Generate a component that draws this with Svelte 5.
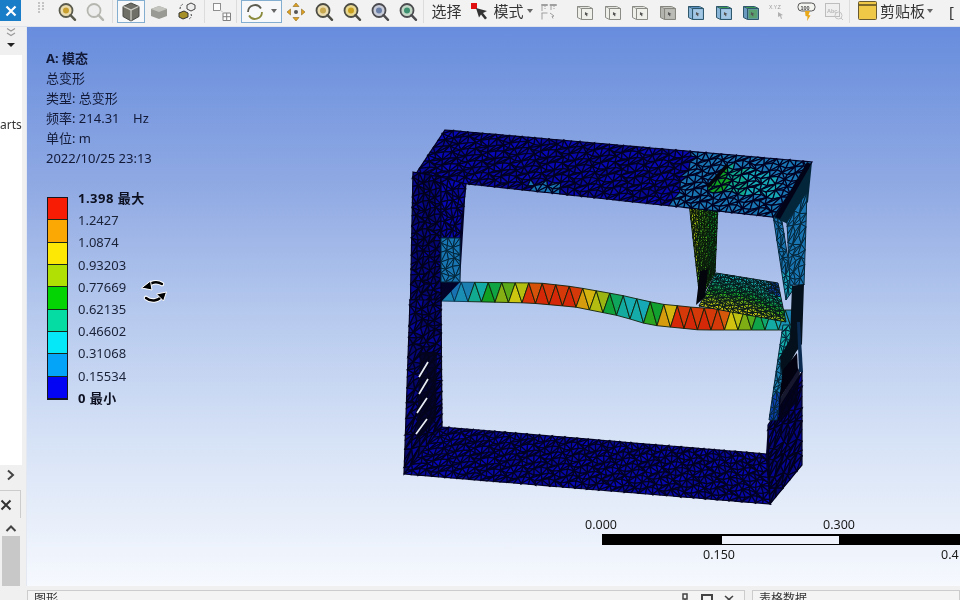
<script>
  const infoLines = ['总变形', '类型: 总变形', '频率: 214.31    Hz', '单位: m', '2022/10/25 23:13'];
  const legend = [
    { label: '1.398 最大', color: '#f81c04', strong: true },
    { label: '1.2427', color: '#fca804' },
    { label: '1.0874', color: '#fce804' },
    { label: '0.93203', color: '#b0e004' },
    { label: '0.77669', color: '#04d404' },
    { label: '0.62135', color: '#04dca4' },
    { label: '0.46602', color: '#04e8f8' },
    { label: '0.31068', color: '#04a4f8' },
    { label: '0.15534', color: '#0404f4' },
    { label: '0 最小', strong: true }
  ];

  // muted contour ramp, value 0..1
  const ramp = [
    [0, [8, 8, 172]], [0.11, [12, 70, 176]], [0.22, [28, 128, 178]], [0.33, [22, 172, 182]],
    [0.44, [16, 168, 130]], [0.55, [16, 160, 34]], [0.66, [140, 176, 18]], [0.77, [210, 200, 16]],
    [0.88, [216, 136, 12]], [1, [212, 40, 8]]
  ];
  function heat(v) {
    v = Math.max(0, Math.min(1, v));
    for (let i = 1; i < ramp.length; i++) {
      if (v <= ramp[i][0]) {
        const [a, ca] = ramp[i - 1];
        const [b, cb] = ramp[i];
        const t = (v - a) / (b - a);
        return `rgb(${ca.map((c, k) => Math.round(c + (cb[k] - c) * t)).join(',')})`;
      }
    }
    return 'rgb(212,40,8)';
  }
  function lerp(points, x) {
    if (x <= points[0][0]) return points[0][1];
    for (let i = 1; i < points.length; i++) {
      if (x <= points[i][0]) {
        const t = (x - points[i - 1][0]) / (points[i][0] - points[i - 1][0]);
        return points[i - 1][1] + (points[i][1] - points[i - 1][1]) * t;
      }
    }
    return points[points.length - 1][1];
  }

  // triangulated quad: corners go a-b along u, d-c along u; inner vertices wobble a bit
  function quad([a, b, c, d], nu, nv, colorAt, line = '#020222', w = 1.2) {
    const out = [];
    const at = (i, j) => {
      let u = i / nu;
      let v = j / nv;
      if (i > 0 && i < nu) u += (Math.sin(i * 12.9 + j * 78.2) * 0.3) / nu;
      if (j > 0 && j < nv) v += (Math.sin(i * 39.3 + j * 11.1) * 0.3) / nv;
      return [
        (a[0] * (1 - u) + b[0] * u) * (1 - v) + (d[0] * (1 - u) + c[0] * u) * v,
        (a[1] * (1 - u) + b[1] * u) * (1 - v) + (d[1] * (1 - u) + c[1] * u) * v
      ];
    };
    for (let i = 0; i < nu; i++) {
      for (let j = 0; j < nv; j++) {
        const p1 = at(i, j);
        const p2 = at(i + 1, j);
        const p3 = at(i + 1, j + 1);
        const p4 = at(i, j + 1);
        const tris = (i + j) % 2 ? [[p1, p2, p3], [p1, p3, p4]] : [[p1, p2, p4], [p2, p3, p4]];
        for (const t of tris) {
          const cx = (t[0][0] + t[1][0] + t[2][0]) / 3;
          const cy = (t[0][1] + t[1][1] + t[2][1]) / 3;
          out.push({ d: t.map((p) => p.map((n) => n.toFixed(1)).join(',')).join(' '), fill: colorAt(cx, cy), line, w });
        }
      }
    }
    return out;
  }

  const blue = (x, y) => `rgb(8,8,${150 + Math.round((Math.sin(x * 0.13 + y * 0.37) + 1) * 16)})`;
  const darkBlue = (x, y) => `rgb(6,6,${104 + Math.round((Math.sin(x * 0.5 + y * 0.7) + 1) * 24)})`;

  function topColor(x, y) {
    const edge = 672 + (205 - y) * 0.4;
    if (x < edge) {
      if (y > 183 && y < 192 && x > 530 && x < 562) return heat(0.2);
      return blue(x, y);
    }
    const inPatch = y > 165 + (x - 730) * 0.28 && y < 190 + (x - 710) * 0.1 && x > 708 + (188 - y) * 0.9 && x < 778;
    if (inPatch) return heat(x < 728 ? 0.55 : x < 745 ? 0.42 : 0.32);
    return heat(0.2);
  }
  const beamHeat = [
    [441, 0.2], [462, 0.24], [472, 0.36], [490, 0.55], [508, 0.68], [522, 0.8], [530, 1], [572, 1], [580, 0.85],
    [595, 0.72], [610, 0.5], [625, 0.34], [640, 0.34], [650, 0.55], [660, 0.72], [670, 1], [716, 1], [724, 0.82],
    [738, 0.7], [752, 0.55], [770, 0.36], [786, 0.24]
  ];
  const beamTop = [[440, 282], [540, 283], [575, 287], [620, 295], [660, 304], [700, 308], [786, 310]];
  const beamBot = [[440, 301], [530, 303], [575, 307], [620, 316], [650, 325], [700, 330], [786, 330]];
  function beam() {
    const out = [];
    for (let x = 441; x < 786; x += 13.5) {
      const x2 = x + 13.5;
      const mid = x + 6.75;
      const v = lerp(beamHeat, mid);
      const line = x < 466 ? '#06304a' : '#102008';
      const tris = [
        [[x, lerp(beamBot, x)], [mid, lerp(beamTop, mid)], [x2, lerp(beamBot, x2)]],
        [[mid, lerp(beamTop, mid)], [x2, lerp(beamBot, x2)], [x2 + 6.75, lerp(beamTop, x2 + 6.75)]]
      ];
      tris.forEach((t, i) => {
        out.push({
          d: t.map((p) => p.map((n) => n.toFixed(1)).join(',')).join(' '),
          fill: heat(v + (i ? -0.02 : 0.02)),
          line,
          w: 0.9
        });
      });
    }
    return out;
  }

  function shelfColor(x, y) {
    const t = (y - (273 + (x - 716) * 0.16)) / 36;
    if (x > 770 && t < 0.35) return heat(0.1);
    return heat(0.3 + 0.48 * t - Math.max(0, x - 750) * 0.004);
  }

  const backMesh = [
    ...quad([[689, 203], [718, 205], [715, 273], [700, 300]], 10, 20, (x) => heat(x < 698 ? 0.68 : x < 708 ? 0.6 : 0.54), '#08160a', 1),
    ...beam(),
    ...quad([[716, 273], [778, 283], [786, 322], [699, 306]], 18, 11, shelfColor, '#06181a', 1),
    ...quad([[773, 215], [781, 215], [793, 290], [786, 300]], 2, 11, (x, y) => heat(y < 270 ? 0.2 : 0.3), '#04263a', 1)
  ];
  const frontMesh = [
    ...quad([[787, 222], [807, 192], [804, 285], [790, 285]], 3, 10, () => heat(0.2), '#04263a', 1),
    ...quad([[445, 130], [812, 162], [773, 217], [413, 178]], 52, 9, topColor),
    ...quad([[413, 172], [441, 177], [441, 305], [410, 322]], 5, 20, darkBlue, '#02021c', 1.2),
    ...quad([[441, 177], [466, 184], [460, 238], [441, 238]], 4, 8, blue),
    ...quad([[441, 238], [460, 238], [460, 282], [441, 282]], 3, 6, () => heat(0.2), '#04263a', 1),
    ...quad([[410, 300], [441, 300], [442, 427], [404, 474]], 5, 22, darkBlue, '#02021c', 1.2),
    ...quad([[442, 427], [766, 454], [770, 504], [404, 474]], 56, 9, blue),
    ...quad([[768, 425], [802, 372], [802, 465], [770, 504]], 5, 11, darkBlue, '#02021c', 1.2),
    ...quad([[769, 420], [777, 420], [792, 325], [783, 325]], 2, 14, (x, y) => heat(y > 395 ? 0.1 : y > 360 ? 0.22 : 0.36), '#04263a', 1)
  ];

  const grips = [0, 1, 2, 3, 4, 5, 6];
</script>

{#snippet lens(fill, ring, inner)}
  <svg class="icon" width="20" height="20" viewBox="0 0 20 20">
    <circle cx="9" cy="8.5" r="6.5" fill={fill} stroke={ring} stroke-width="1.8" />
    {#if inner}<circle cx="9" cy="8.5" r="3" fill={inner} />{/if}
    <path d="M13.5 13.2l4.5 4.6" stroke={ring} stroke-width="2.4" stroke-linecap="round" />
  </svg>
{/snippet}

{#snippet cube(edge, side, top, front)}
  <svg class="icon" width="18" height="18" viewBox="0 0 18 18">
    <path d="M1.5 3.500h11l4 2v11h-11l-4-2z" fill={side} stroke={edge} stroke-width="1" />
    <path d="M1.500 3.500l4 2h11M5.500 5.500v11" fill="none" stroke={edge} stroke-width="1" />
    <path d="M6.500 6.500h9v9h-9z" fill={front} />
    <path d="M2.500 4h9.500l3 1h-9.500z" fill={top} />
    <path d="M9 9l3.500 2-1.500.5.500 1.500-1 .3-.600-1.500-1 .5z" fill="#555" />
  </svg>
{/snippet}

<div class="page">
  <header class="toolbar">
    <div class="close-btn">
      <svg width="12" height="12" viewBox="0 0 12 12"><path d="M1.500 1.500l9 9M10.500 1.500l-9 9" stroke="#fff" stroke-width="2.200" /></svg>
    </div>
    <div class="gripper">
      {#each grips as g}<i></i>{/each}
    </div>
    <div class="tool">{@render lens('#eadcae', '#5a5a4c', '#c9a030')}</div>
    <div class="tool faded">{@render lens('#ececec', '#a8a8a0', null)}</div>
    <span class="sep first"></span>
    <div class="tool selected">
      <svg class="icon" width="20" height="20" viewBox="0 0 20 20">
        <path d="M10 1l8 3.500v10l-8 4.500-8-4.500v-10z" fill="#6f6f68" stroke="#4a4a44" />
        <path d="M2.500 4.500l7.500 3.500 7.500-3.500M10 8v10.500" fill="none" stroke="#d0d0c8" stroke-width="1.200" />
      </svg>
    </div>
    <div class="tool">
      <svg class="icon" width="18" height="16" viewBox="0 0 18 16">
        <path d="M9 2l8 3v7l-8 3-8-3v-7z" fill="#9a9a94" />
        <path d="M1 5l8 3 8-3-8-3z" fill="#c4c4be" />
      </svg>
    </div>
    <div class="tool">
      <svg class="icon" width="20" height="20" viewBox="0 0 20 20">
        <path d="M2 11l5-2 4 2v4l-5 2-4-2z" fill="#a58f28" stroke="#333" />
        <path d="M10 3l4-2 4 2v4l-4 2-4-2z" fill="#eee" stroke="#444" />
        <path d="M3 7c0-3 2-5 4-5M14 12c1 2 0 4-2 5" fill="none" stroke="#444" stroke-dasharray="2 1.500" />
      </svg>
    </div>
    <span class="sep"></span>
    <div class="tool faded">
      <svg class="icon" width="20" height="20" viewBox="0 0 20 20">
        <rect x="1.500" y="1.500" width="7" height="7" fill="#fff" stroke="#777" />
        <path d="M11 11h7.500v7.500h-7.500zM14.700 11v7.500M11 14.700h7.500" fill="#fff" stroke="#666" />
        <path d="M8 8l4 3" stroke="#bbb" />
      </svg>
    </div>
    <span class="sep tight"></span>
    <div class="rotate-tool selected">
      <svg width="20" height="20" viewBox="0 0 20 20" fill="none" stroke-width="1.800">
        <path d="M3 10a7 7 0 0 1 13-3.500" stroke="#5c5c50" />
        <path d="M17 10a7 7 0 0 1-13 3.500" stroke="#8a8a3c" />
      </svg>
      <span class="caret"></span>
    </div>
    <div class="tool">
      <svg class="icon" width="20" height="20" viewBox="0 0 20 20">
        <path d="M10 1l3 3.500h-6zM10 19l3-3.500h-6zM1 10l3.500-3v6zM19 10l-3.500-3v6z" fill="#e0a020" stroke="#8a6a20" stroke-width=".6" />
        <circle cx="10" cy="10" r="2" fill="#555" />
      </svg>
    </div>
    <div class="tool">{@render lens('#eadcae', '#4c4c44', '#c8a850')}</div>
    <div class="tool">{@render lens('#e8d890', '#4c4c44', '#c9a020')}</div>
    <div class="tool">{@render lens('#c8ccd8', '#4c4c50', '#6a80a8')}</div>
    <div class="tool">{@render lens('#c4d8c8', '#4c4c50', '#3c9070')}</div>
    <span class="sep wide"></span>
    <span class="tool-text">选择</span>
    <svg class="pointer" width="20" height="20" viewBox="0 0 20 20">
      <rect x="1" y="2" width="6" height="6" fill="#e01010" />
      <path d="M6 7l11 3-4 2 4 5-2 1.500-4-5-2 3z" fill="#333" />
    </svg>
    <span class="tool-text mode">模式</span>
    <span class="caret"></span>
    <div class="tool small first-cube">
      <svg class="icon" width="18" height="18" viewBox="0 0 18 18" fill="none" stroke="#a0a0a0">
        <path d="M1.500 1.500h6v1h-6zM10 1.500h6.500v1h-6.500zM2 3v5M11 3v4M1.500 10h6M2 10v6.500M10 10l4 3-2 .5 1 2" />
        <path d="M5 3v3M14 3v3" stroke-dasharray="1 1" />
      </svg>
    </div>
    <div class="tool small cube-gap">{@render cube('#8c8c86', '#efefea', '#e4e4de', '#f0f0ea')}</div>
    <div class="tool small">{@render cube('#8c8c86', '#efefea', '#e4e4de', '#f0f0ea')}</div>
    <div class="tool small">{@render cube('#8c8c86', '#efefea', '#e4e4de', '#f0f0ea')}</div>
    <div class="tool small">{@render cube('#86867e', '#b4b4ae', '#c8c8c2', '#bcbcb6')}</div>
    <div class="tool small">{@render cube('#30586c', '#88b4d8', '#5a90c0', '#a4c8e4')}</div>
    <div class="tool small">{@render cube('#30586c', '#88b4d8', '#3a9a50', '#a4c8e4')}</div>
    <div class="tool small">{@render cube('#30586c', '#6a9ac0', '#3a9a50', '#58a070')}</div>
    <div class="tool small">
      <svg class="icon" width="20" height="18" viewBox="0 0 20 18">
        <text x="0" y="6" class="xyz">X.Y.Z</text>
        <path d="M9 9l5 3-2 .5 1 3-1 .4-1-3-2 1z" fill="#b0b0b0" />
      </svg>
    </div>
    <div class="tool small">
      <svg class="icon" width="20" height="20" viewBox="0 0 20 20">
        <rect x="1" y="1" width="17" height="8" rx="3.500" fill="#f4f4f0" stroke="#555" />
        <text x="3.500" y="7.500" class="tag">100</text>
        <path d="M8 9h5l-1.500 4 2 .5-3.500 5.500 .5-4.500-2-.5z" fill="#e8a818" />
      </svg>
    </div>
    <div class="tool small faded">
      <svg class="icon" width="20" height="20" viewBox="0 0 20 20">
        <rect x="1.500" y="1.500" width="14" height="13" fill="#efefef" stroke="#b0b0b0" />
        <text x="3" y="11" class="tag grey">Abc</text>
        <circle cx="14.500" cy="13.500" r="3.500" fill="none" stroke="#b8b8b8" />
        <path d="M17 16l2 2" stroke="#b8b8b8" />
      </svg>
    </div>
    <span class="sep last"></span>
    <svg class="clipboard" width="19" height="19" viewBox="0 0 19 19">
      <rect x=".5" y=".5" width="18" height="18" rx="1" fill="#f0c848" stroke="#6a5a30" />
      <path d="M1 4h17" stroke="#5a4a20" stroke-width="1.500" />
    </svg>
    <span class="tool-text clip">剪贴板</span>
    <span class="caret"></span>
    <span class="tool-text bracket">[</span>
  </header>

  <div class="workspace">
    <aside class="sidebar">
      <div class="side-top">
        <svg width="12" height="11" viewBox="0 0 12 11" fill="none" stroke="#9a9a9a" stroke-width="1.200">
          <path d="M2 1.500l4 2.500 4-2.500M2 6l4 2.500 4-2.500" />
        </svg>
        <span class="down-tri"></span>
      </div>
      <div class="tree"><span class="parts">arts</span></div>
      <div class="side-arrow">
        <svg width="10" height="12" viewBox="0 0 10 12" fill="none" stroke="#444" stroke-width="2"><path d="M2 1.500l5 4.500-5 4.500" /></svg>
      </div>
      <div class="side-tab">
        <svg width="12" height="12" viewBox="0 0 12 12"><path d="M1.500 1.500l9 9M10.500 1.500l-9 9" stroke="#333" stroke-width="2" /></svg>
      </div>
      <div class="side-up">
        <svg width="12" height="9" viewBox="0 0 12 9" fill="none" stroke="#444" stroke-width="2"><path d="M1.500 7l4.500-4.500 4.500 4.500" /></svg>
      </div>
      <div class="thumb"></div>
    </aside>

    <main class="viewport">
      <svg class="model" viewBox="26 27 934 559" width="934" height="559">
        {#each backMesh as t}
          <polygon points={t.d} fill={t.fill} stroke={t.line} stroke-width={t.w} />
        {/each}
        <!-- backing so no sliver of sky shows between the faces -->
        <path d="M812 162l-4 40-20 22-15-7z" fill="#04263a" />
        <path d="M413 172l53 12-6 98-19 20 1 125-37 47 6-154z" fill="#03032a" />
        <path d="M766 454l2-29 34-53v93l-32 39z" fill="#03032a" />
        {#each frontMesh as t}
          <polygon points={t.d} fill={t.fill} stroke={t.line} stroke-width={t.w} />
        {/each}
        <!-- slots and dark slats on the two end columns -->
        <path d="M420 352l17 0-1 68-20 22z" fill="#03031c" opacity=".85" />
        <path d="M419 377l9-15M419 394l9-15M417 413l10-15M416 434l11-15" stroke="#e8edf4" stroke-width="1.700" />
        <path d="M792 286l12-2-2 60-6 8-14 25-2-20 10-18z" fill="#04101c" />
        <path d="M783 370l14-17 1 17-19 30z" fill="#020210" />
        <path d="M779 422l18-20 3-30-2-4-19 32z" fill="#020218" opacity=".9" />
        <path d="M780 219l28-49 3-6-4-2-32 55z" fill="#030318" />
        <path d="M709 188l20-22-3-2-20 22zM696 305l4-34 8-2-3 28z" fill="#04040c" />
        <path d="M800 322l3 50h-4l-2-50z" fill="#0a2a50" />
      </svg>

      <section class="info">
        <strong>A: 模态</strong>
        {#each infoLines as line}
          <span>{line}</span>
        {/each}
      </section>

      <section class="legend">
        <div class="swatches">
          {#each legend as item}
            {#if item.color}<i style="background:{item.color}"></i>{/if}
          {/each}
        </div>
        <div class="labels">
          {#each legend as item}
            <span class:strong={item.strong}>{item.label}</span>
          {/each}
        </div>
      </section>

      <svg class="cursor" width="28" height="28" viewBox="0 0 28 28">
        <g fill="none" stroke-linecap="round">
          <path d="M7 10c3-5 10-6 15-3M21 20c-3 4-10 5-15 1" stroke="#fff" stroke-width="4.500" />
          <path d="M7 10c3-5 10-6 15-3M21 20c-3 4-10 5-15 1" stroke="#000" stroke-width="2.400" />
        </g>
        <path d="M1.500 11l9-7 1.500 9z" fill="#000" stroke="#fff" />
        <path d="M26.500 15l-10 2 7 7z" fill="#000" stroke="#fff" />
      </svg>

      <section class="scale">
        <div class="ticks upper"><span>0.000</span><span>0.300</span></div>
        <div class="bar"><i></i></div>
        <div class="ticks lower"><span>0.150</span><span>0.4</span></div>
      </section>
    </main>
  </div>

  <footer class="bottom">
    <div class="panel graph">
      <span>图形</span>
      <div class="panel-icons">
        <svg width="10" height="10" viewBox="0 0 10 10"><path d="M3 1h4v5h-4zM5 6v4" fill="none" stroke="#444" stroke-width="1.500" /></svg>
        <svg width="12" height="10" viewBox="0 0 12 10"><path d="M1 2h10v8h-10z" fill="none" stroke="#444" stroke-width="2" /></svg>
        <svg width="10" height="10" viewBox="0 0 10 10"><path d="M1 3l8 7M9 3l-8 7" stroke="#444" stroke-width="1.600" /></svg>
      </div>
    </div>
    <div class="panel table"><span>表格数据</span></div>
  </footer>
</div>

<style>
  :global(body) {
    margin: 0;
    background: #f0f0f0;
  }

  .page {
    width: 960px;
    height: 600px;
    display: flex;
    flex-direction: column;
    overflow: hidden;
    font-family: 'Noto Sans', 'Noto Sans CJK SC', sans-serif;
    color: #222;
  }

  .toolbar {
    height: 27px;
    flex: none;
    display: flex;
    align-items: flex-start;
    background: #f2f2f2;
    box-sizing: border-box;
    border-bottom: 1px solid #dfe4ec;
    filter: blur(0.4px);
    overflow: hidden;
  }

  .close-btn {
    width: 21px;
    height: 21px;
    flex: none;
    display: flex;
    align-items: center;
    justify-content: center;
    background: #1a7dc8;
  }

  .gripper {
    width: 8px;
    margin: 2px 7px 0 17px;
    display: grid;
    grid-template-columns: 2px 2px;
    gap: 1px 2px;
    flex: none;
  }
  .gripper i {
    height: 2px;
    background: #c4c4c4;
  }

  .tool {
    width: 28px;
    height: 23px;
    flex: none;
    display: flex;
    align-items: center;
    justify-content: center;
    box-sizing: border-box;
  }
  .tool.small {
    width: 27.7px;
  }
  .icon {
    display: block;
  }
  .faded {
    opacity: 0.8;
  }
  .selected {
    border: 1px solid #84aed0;
    background: #f6f8fa;
  }

  .sep {
    width: 1px;
    height: 23px;
    flex: none;
    margin: 0 3px;
    background: #dcdcdc;
  }
  .sep.first {
    margin: 0 3.500px 0 3px;
  }
  .sep.tight {
    margin: 0 4px 0 0;
  }
  .sep.wide {
    margin: 0 8px 0 1px;
  }
  .sep.last {
    margin: 0 8px 0 1px;
  }

  .rotate-tool {
    width: 41px;
    height: 23px;
    flex: none;
    display: flex;
    align-items: center;
    gap: 6px;
    padding-left: 3px;
    box-sizing: border-box;
  }

  .caret {
    width: 0;
    height: 0;
    flex: none;
    margin-top: 9px;
    border: 3.500px solid transparent;
    border-top: 4px solid #666;
    border-bottom: 0;
    align-self: flex-start;
  }
  .rotate-tool .caret {
    margin-top: 8px;
  }

  .tool-text {
    flex: none;
    font-size: 15px;
    line-height: 22px;
    color: #333;
  }
  .pointer {
    flex: none;
    margin: 1px 4px 0 8px;
  }
  .mode {
    margin-right: 3px;
  }
  .first-cube {
    margin-left: 3px;
  }
  .cube-gap {
    margin-left: 8px;
  }
  .clipboard {
    flex: none;
    margin-top: 1px;
  }
  .clip {
    margin: 0 2px 0 3px;
  }
  .bracket {
    margin-left: 16px;
  }
  .xyz {
    font-size: 5px;
    fill: #999;
    font-family: 'Liberation Sans', sans-serif;
  }
  .tag {
    font-size: 5.500px;
    font-weight: 700;
    fill: #444;
    font-family: 'Liberation Sans', sans-serif;
  }
  .tag.grey {
    fill: #aaa;
  }

  .workspace {
    flex: 1;
    min-height: 0;
    display: flex;
  }

  .sidebar {
    width: 26px;
    flex: none;
    display: flex;
    flex-direction: column;
    align-items: flex-start;
    background: #f0f0f0;
    filter: blur(0.4px);
  }
  .side-top {
    width: 22px;
    height: 28px;
    display: flex;
    flex-direction: column;
    align-items: center;
    gap: 5px;
    flex: none;
  }
  .down-tri {
    width: 0;
    height: 0;
    border: 4px solid transparent;
    border-top: 4px solid #222;
    border-bottom: 0;
  }
  .tree {
    width: 22px;
    height: 410px;
    flex: none;
    background: #fff;
    overflow: hidden;
  }
  .parts {
    display: block;
    margin-top: 60px;
    font-size: 12px;
    line-height: 20px;
    white-space: nowrap;
    color: #333;
  }
  .side-arrow {
    width: 22px;
    height: 20px;
    flex: none;
    display: flex;
    align-items: center;
    justify-content: center;
  }
  .side-tab {
    width: 21px;
    height: 28px;
    flex: none;
    display: flex;
    align-items: center;
    box-sizing: border-box;
    border-top: 1px solid #ccc;
    border-right: 1px solid #ccc;
    margin-top: 5px;
  }
  .side-up {
    width: 22px;
    height: 16px;
    flex: none;
    display: flex;
    align-items: center;
    justify-content: center;
    margin-top: 2px;
  }
  .thumb {
    width: 18px;
    margin-left: 2px;
    flex: 1;
    background: #c8c8c8;
  }

  .viewport {
    flex: 1;
    position: relative;
    overflow: hidden;
    background: linear-gradient(180deg, #688ddd 0%, #8fa9e3 28%, #b7caee 52%, #d6e2f6 74%, #f6f9fe 100%);
    border-left: 1px solid #e4e8f0;
  }

  .model {
    position: absolute;
    left: -1px;
    top: 0;
    display: block;
    filter: blur(0.55px);
  }

  .info {
    position: absolute;
    left: 19px;
    top: 21px;
    display: flex;
    flex-direction: column;
    font-size: 13px;
    line-height: 20px;
    color: #121a38;
    white-space: pre;
    filter: blur(0.3px);
  }
  .info strong {
    font-weight: 700;
  }

  .legend {
    position: absolute;
    left: 20px;
    top: 160px;
    display: flex;
    gap: 10px;
    filter: blur(0.3px);
  }
  .swatches {
    width: 21px;
    height: 203px;
    box-sizing: border-box;
    margin-top: 10px;
    display: flex;
    flex-direction: column;
    border: 1px solid #16161e;
    border-bottom-width: 2px;
  }
  .swatches i {
    flex: 1;
    border-bottom: 1px solid #1a2a1a;
  }
  .swatches i:last-child {
    border-bottom: 0;
  }
  .labels {
    display: flex;
    flex-direction: column;
    font-size: 13px;
    line-height: 22.200px;
    color: #1a2238;
    white-space: nowrap;
  }
  .strong {
    font-weight: 700;
    letter-spacing: 0.5px;
    color: #0c1020;
  }

  .cursor {
    position: absolute;
    left: 113px;
    top: 250px;
  }

  .scale {
    position: absolute;
    left: 558px;
    top: 490px;
    width: 375px;
    font-size: 12.500px;
    line-height: 16px;
    color: #1a1a1a;
    filter: blur(0.3px);
  }
  .ticks {
    position: relative;
    height: 16px;
  }
  .ticks span {
    position: absolute;
    top: 0;
  }
  .upper span:first-child {
    left: 0;
  }
  .upper span:last-child {
    left: 238px;
  }
  .lower span:first-child {
    left: 118px;
  }
  .lower span:last-child {
    left: 356px;
  }
  .bar {
    height: 11px;
    margin: 1px 0 2px 17px;
    background: #000;
    display: flex;
    align-items: center;
  }
  .bar i {
    width: 117px;
    height: 8px;
    margin-left: 120px;
    background: #eef2fa;
  }

  .bottom {
    height: 14px;
    flex: none;
    display: flex;
    gap: 7px;
    padding: 4px 0 0 27px;
    box-sizing: border-box;
    background: #f0f0f0;
    overflow: hidden;
    filter: blur(0.4px);
  }
  .panel {
    box-sizing: border-box;
    height: 30px;
    padding: 0 6px;
    border: 1px solid #ccc;
    background: #f4f4f4;
    display: flex;
    justify-content: space-between;
    font-size: 12px;
    line-height: 15px;
    color: #333;
  }
  .graph {
    width: 718px;
  }
  .table {
    flex: 1;
  }
  .panel-icons {
    display: flex;
    gap: 11px;
    padding: 2px 4px 0 0;
    align-items: flex-start;
  }
</style>
